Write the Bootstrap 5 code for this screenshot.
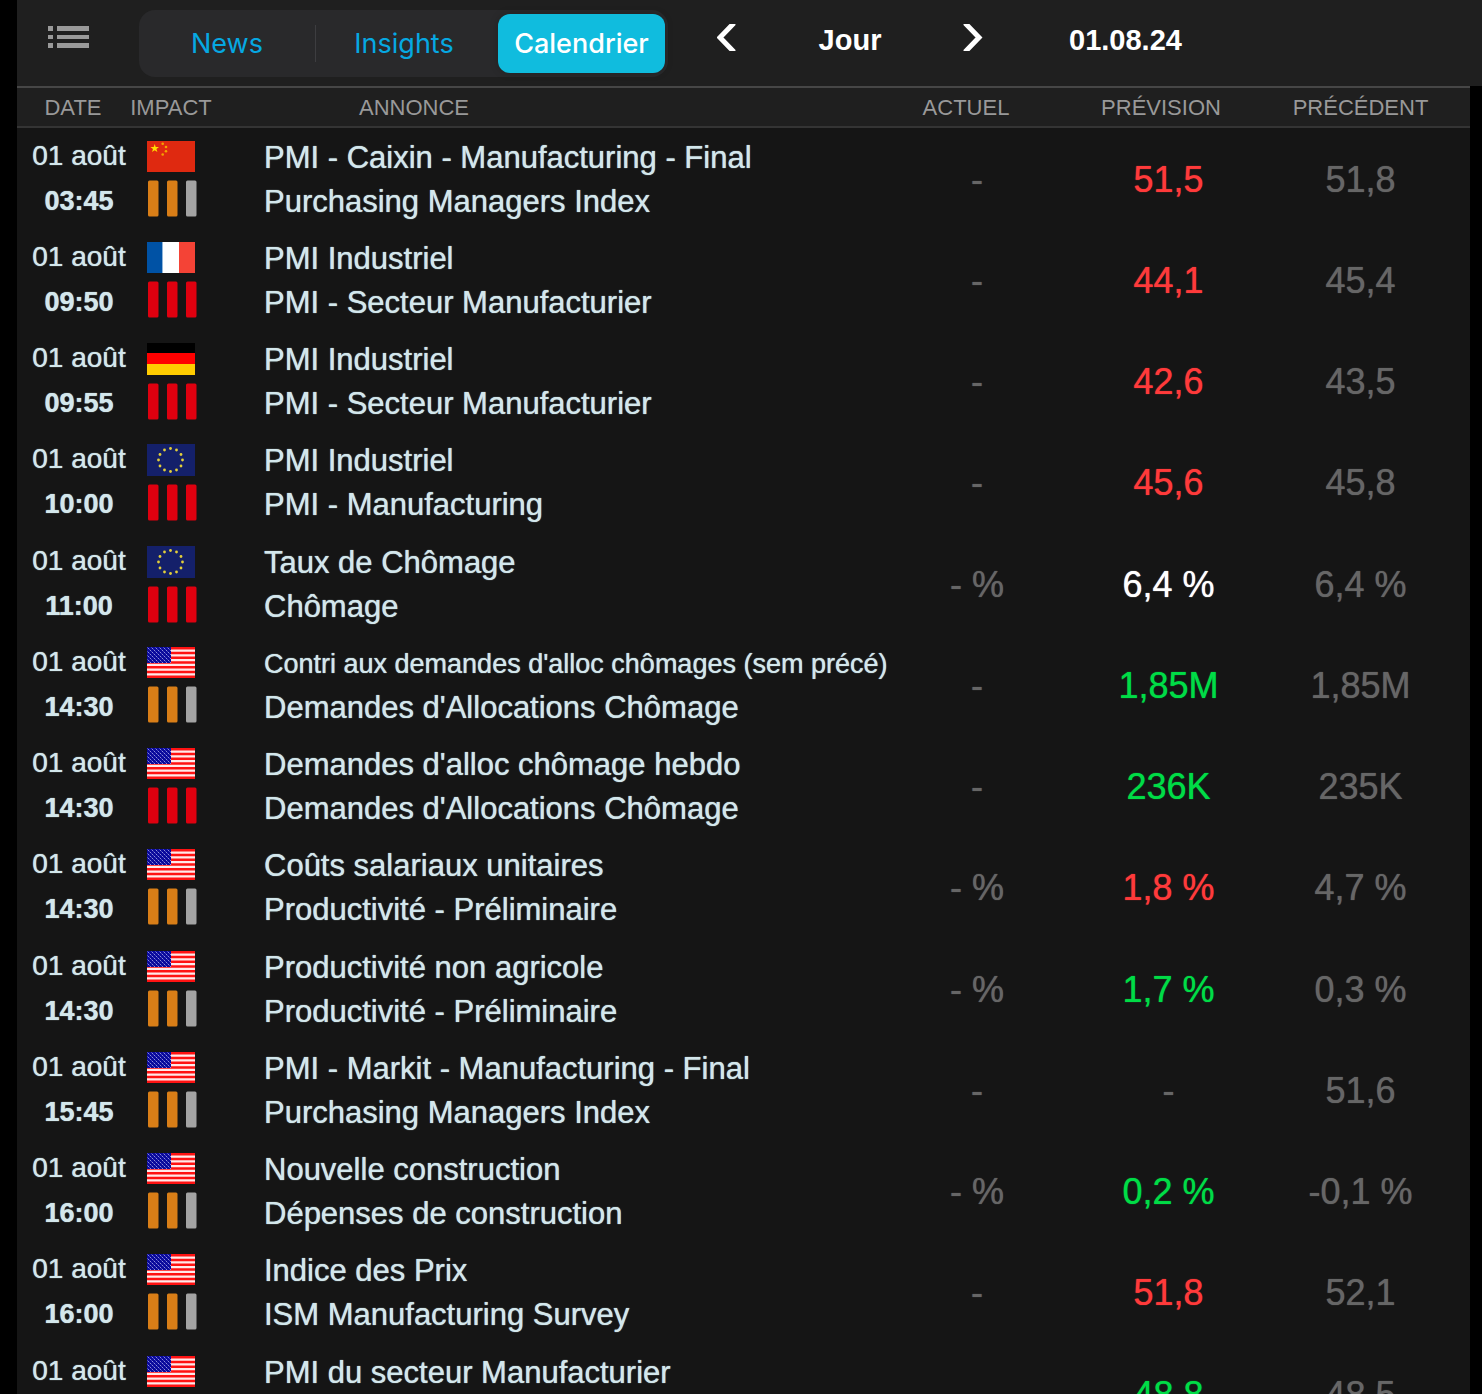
<!DOCTYPE html>
<html lang="fr">
<head>
<meta charset="utf-8">
<meta name="viewport" content="width=device-width, initial-scale=1">
<title>Calendrier économique</title>
<link href="https://cdn.jsdelivr.net/npm/bootstrap@5.3.0/dist/css/bootstrap.min.css" rel="stylesheet">
<style>
body{background:#000;color:#d3e7ec;font-family:"Liberation Sans",Arial,sans-serif}
.app{padding-left:17px}
.topbar{background:#1f1f1f;min-height:86px;padding-left:31px}
.menu-btn,.step-btn{background:none;border:0;padding:0 0 12px;line-height:0}
.menu-btn{margin-right:50px}
.segments{background:#29292b;border-radius:16px;height:67px;margin-right:49px;font-family:Inter,sans-serif;font-size:27px}
.segments button{background:none;border:0;padding:2px 0 0;color:#06a8e2;height:59px}
.seg-news{width:176px}
.seg-insights{width:178px;margin-right:5px}
.seg-line{width:1px;height:37px;background:#3d3d40;margin-right:-1px}
.segments .seg-on{width:167px;margin-right:3px;background:#10bcde;color:#fff;border-radius:12px;font-weight:500;box-shadow:0 0 8px rgba(0,0,0,.2)}
.period{width:226px}
.period,.day{color:#fff;font-size:29px;font-weight:700;padding-bottom:4px}
.day{margin-left:86px}
.sheet{background:#151515;margin-right:12px}
.agenda{width:100%;table-layout:fixed;border-collapse:separate;border-spacing:0}
.agenda th{background:#1f1f1f;border-top:2px solid #464646;border-bottom:2px solid #343434;height:42px;padding:3px 0 1px;font-size:22px;line-height:34px;font-weight:400;color:#999;text-align:center;white-space:nowrap}
.c-date{width:112px}.c-impact{width:84px}.c-act{width:190px}.c-prev{width:193px}.c-last{width:205px}
.agenda th.h-name{text-align:left;padding-left:146px}
.agenda th.h-act{padding-right:22px}
.agenda th.h-prev{padding-right:15px}
.agenda th.h-last{padding-right:14px}
.agenda td{height:101px;padding:0;vertical-align:top;white-space:nowrap}
.agenda tr:nth-child(4n) td{height:102px}
.agenda .when{text-align:center;padding:5px 0 0 12px;font-size:28px;line-height:46px}
.when b{display:block;font-size:27px;line-height:44px}
.agenda .impact{padding:13px 0 0 18px;line-height:0}
.impact svg{display:block}
.impact svg+svg{margin-top:8px}
.agenda .what{padding:8px 0 0 51px;font-size:31px;line-height:44px}
.what div{height:44px}
.what .long{font-size:27px}
.when,.what,.num{text-shadow:0 0 1px currentColor}
.agenda .num{font-size:36px;line-height:54px;padding-top:25px;text-align:center;color:#666}
.agenda .num:last-child{padding-right:14px}
.agenda .dn{color:#ff3a3a}.agenda .up{color:#00dc46}.agenda .eq{color:#fff}
@media (min-width:1200px){html,body,.app{height:100vh;overflow:hidden}.sheet{min-height:calc(100vh - 86px)}}
@media (max-width:1199px){.sheet{overflow-x:auto}.agenda{min-width:1300px}.topbar{flex-wrap:wrap}}
</style>
<script src="https://cdn.jsdelivr.net/npm/bootstrap@5.3.0/dist/js/bootstrap.bundle.min.js"></script>
</head>
<body>
<svg class="position-absolute" width="0" height="0" aria-hidden="true">
  <defs>
    <pattern id="stars" width="4" height="4" patternUnits="userSpaceOnUse"><rect width="4" height="4" fill="#0a0a9c"/><rect x="1" y="1" width="1" height="1" fill="#8c8cdc"/><rect x="3" y="3" width="1" height="1" fill="#8c8cdc"/><rect x="2" y="2" width="1" height="1" fill="#4646b8"/><rect x="0" y="0" width="1" height="1" fill="#4646b8"/></pattern>
  </defs>
  <symbol id="cn" viewBox="0 0 48 31"><path fill="#df2910" d="M0 0h48v31H0z"/><path fill="#ffde00" d="M7.700 3l1 3.100H12L9.400 8l1 3.100-2.700-1.900L5 11.100 6 8 3.400 6.100h3.300z"/><g fill="#f5a300"><circle cx="15.700" cy="2.700" r="1.300"/><circle cx="19" cy="6" r="1.300"/><circle cx="19" cy="10.300" r="1.300"/><circle cx="15.700" cy="13.500" r="1.300"/></g></symbol>
  <symbol id="fr" viewBox="0 0 48 31"><path fill="#fff" d="M0 0h48v31H0z"/><path fill="#0052a5" d="M0 0h15v31H0z"/><path fill="#8fb5da" d="M15 0h1v31h-1z"/><path fill="#f44336" d="M32 0h16v31H32z"/></symbol>
  <symbol id="de" viewBox="0 0 48 32"><path d="M0 0h48v11H0z"/><path fill="#f00" d="M0 10h48v11H0z"/><path fill="#fc0" d="M0 21h48v11H0z"/></symbol>
  <symbol id="eu" viewBox="0 0 48 32"><path fill="#14206a" d="M0 0h48v32H0z"/><g fill="#e3cf3a"><circle cx="23.500" cy="4.500" r="1.400"/><circle cx="29.500" cy="6" r="1.400"/><circle cx="34" cy="10.500" r="1.400"/><circle cx="35.500" cy="16" r="1.400"/><circle cx="34" cy="22" r="1.400"/><circle cx="29.500" cy="26" r="1.400"/><circle cx="23.500" cy="27.500" r="1.400"/><circle cx="17.500" cy="26" r="1.400"/><circle cx="13" cy="22" r="1.400"/><circle cx="11.500" cy="16" r="1.400"/><circle cx="13" cy="10.500" r="1.400"/><circle cx="17.500" cy="6" r="1.400"/></g></symbol>
  <symbol id="us" viewBox="0 0 48 31"><path fill="#ffe9e9" d="M0 0h48v31H0z"/><path stroke="#ff1212" stroke-width="2.400" d="M0 1.200h48M0 6h48M0 10.700h48M0 15.500h48M0 20.300h48M0 25h48M0 29.800h48"/><path fill="url(#stars)" d="M0 0h24v16H0z"/></symbol>
  <symbol id="mid" viewBox="0 0 50 37"><g fill="#d97e17"><rect x="1" y="0.500" width="10.500" height="36" rx="1.500"/><rect x="20" y="0.500" width="10.500" height="36" rx="1.500"/></g><rect x="39" y="0.500" width="10.500" height="36" rx="1.500" fill="#a3a3a3"/></symbol>
  <symbol id="high" viewBox="0 0 50 37"><g fill="#df000f"><rect x="1" y="0.500" width="10.500" height="36" rx="1.500"/><rect x="20" y="0.500" width="10.500" height="36" rx="1.500"/><rect x="39" y="0.500" width="10.500" height="36" rx="1.500"/></g></symbol>
</svg>
<div class="app">
  <header class="topbar d-flex align-items-center">
    <button class="menu-btn" type="button" aria-label="Menu"><svg width="41" height="22" viewBox="0 0 41 22" fill="#999"><path d="M0 0h5v5H0zM9 0h32v5H9zM0 9h5v4H0zM9 9h32v4H9zM0 17h5v5H0zM9 17h32v5H9z"/></svg></button>
    <div class="segments d-flex align-items-center" role="group" aria-label="Rubriques">
      <button type="button" class="seg-news">News</button>
      <span class="seg-line"></span>
      <button type="button" class="seg-insights">Insights</button>
      <button type="button" class="seg-on" aria-pressed="true">Calendrier</button>
    </div>
    <button class="step-btn" type="button" aria-label="Précédent"><svg width="20" height="27" viewBox="0 0 20 27"><path d="M17-1L3 13.500 17 28" fill="none" stroke="#fff" stroke-width="5"/></svg></button>
    <div class="period text-center">Jour</div>
    <button class="step-btn" type="button" aria-label="Suivant"><svg width="20" height="27" viewBox="0 0 20 27"><path d="M2-1l14 14.500L2 28" fill="none" stroke="#fff" stroke-width="5"/></svg></button>
    <div class="day">01.08.24</div>
  </header>
  <main class="sheet">
    <table class="agenda">
      <thead><tr><th class="c-date" scope="col">DATE</th><th class="c-impact" scope="col">IMPACT</th><th class="h-name" scope="col">ANNONCE</th><th class="c-act h-act" scope="col">ACTUEL</th><th class="c-prev h-prev" scope="col">PRÉVISION</th><th class="c-last h-last" scope="col">PRÉCÉDENT</th></tr></thead>
      <tbody>
        <tr><td class="when">01 août<b>03:45</b></td><td class="impact"><svg width="48" height="31"><use href="#cn"/></svg><svg width="50" height="37"><use href="#mid"/></svg></td><td class="what"><div>PMI - Caixin - Manufacturing - Final</div><div>Purchasing Managers Index</div></td><td class="num">-</td><td class="num dn">51,5</td><td class="num">51,8</td></tr>
        <tr><td class="when">01 août<b>09:50</b></td><td class="impact"><svg width="48" height="31"><use href="#fr"/></svg><svg width="50" height="37"><use href="#high"/></svg></td><td class="what"><div>PMI Industriel</div><div>PMI - Secteur Manufacturier</div></td><td class="num">-</td><td class="num dn">44,1</td><td class="num">45,4</td></tr>
        <tr><td class="when">01 août<b>09:55</b></td><td class="impact"><svg width="48" height="32"><use href="#de"/></svg><svg width="50" height="37"><use href="#high"/></svg></td><td class="what"><div>PMI Industriel</div><div>PMI - Secteur Manufacturier</div></td><td class="num">-</td><td class="num dn">42,6</td><td class="num">43,5</td></tr>
        <tr><td class="when">01 août<b>10:00</b></td><td class="impact"><svg width="48" height="32"><use href="#eu"/></svg><svg width="50" height="37"><use href="#high"/></svg></td><td class="what"><div>PMI Industriel</div><div>PMI - Manufacturing</div></td><td class="num">-</td><td class="num dn">45,6</td><td class="num">45,8</td></tr>
        <tr><td class="when">01 août<b>11:00</b></td><td class="impact"><svg width="48" height="32"><use href="#eu"/></svg><svg width="50" height="37"><use href="#high"/></svg></td><td class="what"><div>Taux de Chômage</div><div>Chômage</div></td><td class="num">- %</td><td class="num eq">6,4 %</td><td class="num">6,4 %</td></tr>
        <tr><td class="when">01 août<b>14:30</b></td><td class="impact"><svg width="48" height="31"><use href="#us"/></svg><svg width="50" height="37"><use href="#mid"/></svg></td><td class="what"><div class="long">Contri aux demandes d'alloc chômages (sem précé)</div><div>Demandes d'Allocations Chômage</div></td><td class="num">-</td><td class="num up">1,85M</td><td class="num">1,85M</td></tr>
        <tr><td class="when">01 août<b>14:30</b></td><td class="impact"><svg width="48" height="31"><use href="#us"/></svg><svg width="50" height="37"><use href="#high"/></svg></td><td class="what"><div>Demandes d'alloc chômage hebdo</div><div>Demandes d'Allocations Chômage</div></td><td class="num">-</td><td class="num up">236K</td><td class="num">235K</td></tr>
        <tr><td class="when">01 août<b>14:30</b></td><td class="impact"><svg width="48" height="31"><use href="#us"/></svg><svg width="50" height="37"><use href="#mid"/></svg></td><td class="what"><div>Coûts salariaux unitaires</div><div>Productivité - Préliminaire</div></td><td class="num">- %</td><td class="num dn">1,8 %</td><td class="num">4,7 %</td></tr>
        <tr><td class="when">01 août<b>14:30</b></td><td class="impact"><svg width="48" height="31"><use href="#us"/></svg><svg width="50" height="37"><use href="#mid"/></svg></td><td class="what"><div>Productivité non agricole</div><div>Productivité - Préliminaire</div></td><td class="num">- %</td><td class="num up">1,7 %</td><td class="num">0,3 %</td></tr>
        <tr><td class="when">01 août<b>15:45</b></td><td class="impact"><svg width="48" height="31"><use href="#us"/></svg><svg width="50" height="37"><use href="#mid"/></svg></td><td class="what"><div>PMI - Markit - Manufacturing - Final</div><div>Purchasing Managers Index</div></td><td class="num">-</td><td class="num">-</td><td class="num">51,6</td></tr>
        <tr><td class="when">01 août<b>16:00</b></td><td class="impact"><svg width="48" height="31"><use href="#us"/></svg><svg width="50" height="37"><use href="#mid"/></svg></td><td class="what"><div>Nouvelle construction</div><div>Dépenses de construction</div></td><td class="num">- %</td><td class="num up">0,2 %</td><td class="num">-0,1 %</td></tr>
        <tr><td class="when">01 août<b>16:00</b></td><td class="impact"><svg width="48" height="31"><use href="#us"/></svg><svg width="50" height="37"><use href="#mid"/></svg></td><td class="what"><div>Indice des Prix</div><div>ISM Manufacturing Survey</div></td><td class="num">-</td><td class="num dn">51,8</td><td class="num">52,1</td></tr>
        <tr><td class="when">01 août</td><td class="impact"><svg width="48" height="31"><use href="#us"/></svg></td><td class="what"><div>PMI du secteur Manufacturier</div></td><td class="num"></td><td class="num up">48,8</td><td class="num">48,5</td></tr>
      </tbody>
    </table>
  </main>
</div>
</body>
</html>
